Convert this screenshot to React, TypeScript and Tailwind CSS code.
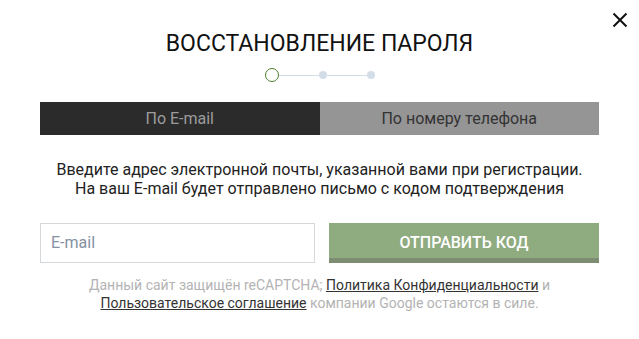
import React from "react";

export default function App() {
  return (
    <div
      className="relative w-[639px] h-[339px] bg-white overflow-hidden"
      style={{ fontFamily: "Roboto, 'Liberation Sans', sans-serif" }}
    >
      <button className="absolute left-[612px] top-[12px] w-[16px] h-[16px] flex items-center justify-center">
        <svg width="16" height="16" viewBox="0 0 16 16">
          <path d="M1.5 1.5 L14.5 14.5 M14.5 1.5 L1.5 14.5" stroke="#111" strokeWidth="2" />
        </svg>
      </button>

      <div className="flex flex-col mx-10 pt-[30px]">
        <h1 className="text-center text-[23px] leading-[28px] text-[#111] font-normal">
          ВОССТАНОВЛЕНИЕ ПАРОЛЯ
        </h1>

        <div className="flex justify-center items-center mt-[10px] h-[14px]">
          <div className="w-[14px] h-[14px] rounded-full border border-[#4f7f2e] bg-white" />
          <div className="w-[40px] h-px bg-[#d3dde8]" />
          <div className="w-[8px] h-[8px] rounded-full bg-[#d3dde8]" />
          <div className="w-[40px] h-px bg-[#d3dde8]" />
          <div className="w-[8px] h-[8px] rounded-full bg-[#d3dde8]" />
        </div>

        <div className="flex mt-[20px] h-[33px]">
          <div className="flex-1 bg-[#2b2b2b] flex items-center justify-center text-[16px] text-[#9c9c9c]">
            По E-mail
          </div>
          <div className="flex-1 bg-[#959595] flex items-center justify-center text-[16px] text-[#333]">
            По номеру телефона
          </div>
        </div>

        <p className="mt-[25px] text-center text-[16px] leading-[19px] text-[#222]">
          Введите адрес электронной почты, указанной вами при регистрации.
          <br />
          На ваш E-mail будет отправлено письмо с кодом подтверждения
        </p>

        <div className="flex mt-[25px] gap-[14px] h-[40px]">
          <div className="w-[275px] h-[40px] border border-[#d6d9dc] flex items-center px-[10px] text-[16px] text-[#8691a3]">
            E-mail
          </div>
          <div className="flex-1 h-[40px] bg-[#8fab80] border-b-[5px] border-[#7e8d72] flex items-center justify-center text-white text-[16px] font-medium uppercase pt-[4px]">
            Отправить код
          </div>
        </div>

        <p className="mt-[13px] text-center text-[14px] leading-[18px] text-[#b3b3b3]">
          Данный сайт защищён reCAPTCHA;{" "}
          <a className="underline text-[#333]">Политика Конфиденциальности</a> и
          <br />
          <a className="underline text-[#333]">Пользовательское соглашение</a>{" "}
          компании Google остаются в силе.
        </p>
      </div>
    </div>
  );
}
